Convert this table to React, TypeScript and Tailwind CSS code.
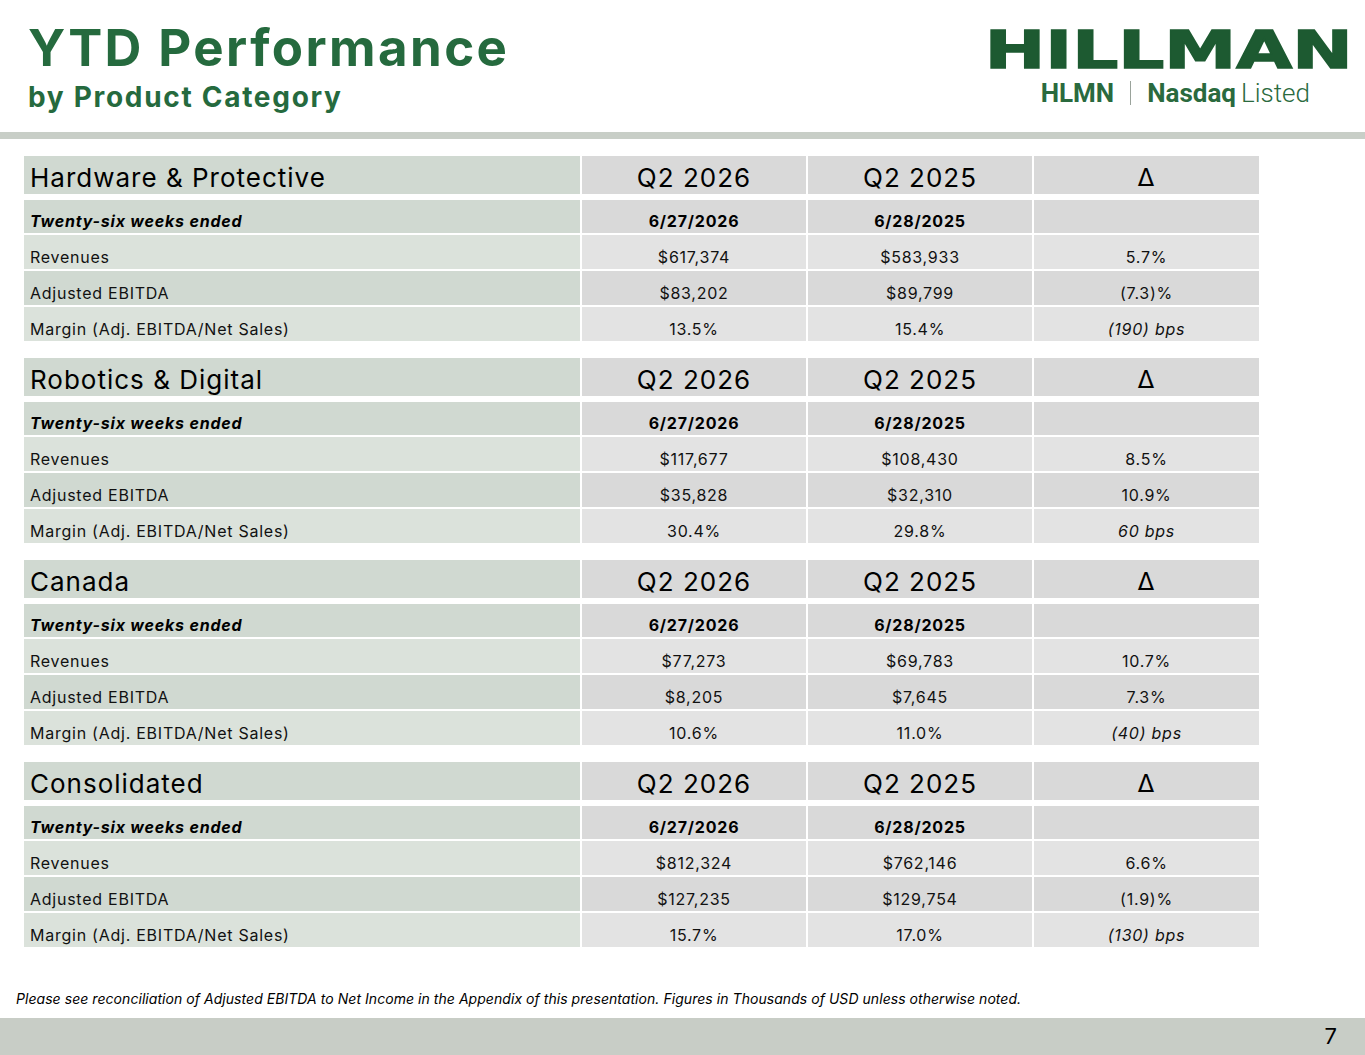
const sections = [
  {
    title: "Hardware & Protective",
    rows: [
      ["Revenues", "$617,374", "$583,933", "5.7%"],
      ["Adjusted EBITDA", "$83,202", "$89,799", "(7.3)%"],
      ["Margin (Adj. EBITDA/Net Sales)", "13.5%", "15.4%", "(190) bps"],
    ],
  },
  {
    title: "Robotics & Digital",
    rows: [
      ["Revenues", "$117,677", "$108,430", "8.5%"],
      ["Adjusted EBITDA", "$35,828", "$32,310", "10.9%"],
      ["Margin (Adj. EBITDA/Net Sales)", "30.4%", "29.8%", "60 bps"],
    ],
  },
  {
    title: "Canada",
    rows: [
      ["Revenues", "$77,273", "$69,783", "10.7%"],
      ["Adjusted EBITDA", "$8,205", "$7,645", "7.3%"],
      ["Margin (Adj. EBITDA/Net Sales)", "10.6%", "11.0%", "(40) bps"],
    ],
  },
  {
    title: "Consolidated",
    rows: [
      ["Revenues", "$812,324", "$762,146", "6.6%"],
      ["Adjusted EBITDA", "$127,235", "$129,754", "(1.9)%"],
      ["Margin (Adj. EBITDA/Net Sales)", "15.7%", "17.0%", "(130) bps"],
    ],
  },
];

const grid = "grid grid-cols-[556px_224px_224px_225px] gap-x-[2px]";

const Section = ({ title, rows }: { title: string; rows: string[][] }) => (
  <div className="flex flex-col">
    {/* Header */}
    <div className={`${grid} h-[38px] text-[26px] leading-[26px] tracking-[1px] text-black`}>
      <div className="bg-[#d0d9d1] flex items-center pl-[6px] pt-[6px]">{title}</div>
      <div className="bg-[#d9d9d9] flex items-center justify-center pt-[6px]">Q2 2026</div>
      <div className="bg-[#d9d9d9] flex items-center justify-center pt-[6px]">Q2 2025</div>
      <div className="bg-[#d9d9d9] flex items-center justify-center pt-[6px] font-['DejaVu_Sans',sans-serif] text-[24px]">Δ</div>
    </div>

    {/* Date row */}
    <div className={`${grid} h-[33px] mt-[6px] text-[16px] leading-[20px] tracking-[0.8px] font-bold text-black`}>
      <div className="bg-[#d0d9d1] flex items-center pl-[6px] pt-[8px] italic">Twenty-six weeks ended</div>
      <div className="bg-[#d9d9d9] flex items-center justify-center pt-[8px]">6/27/2026</div>
      <div className="bg-[#d9d9d9] flex items-center justify-center pt-[8px]">6/28/2025</div>
      <div className="bg-[#d9d9d9]" />
    </div>

    {rows.map((r, i) => {
      const light = i % 2 === 0;
      return (
        <div key={i} className={`${grid} h-[34px] mt-[2px] text-[16px] leading-[20px] tracking-[0.75px] text-[#111]`}>
          <div className={`${light ? "bg-[#dbe2db]" : "bg-[#d0d9d1]"} flex items-center pl-[6px] pt-[10px]`}>{r[0]}</div>
          <div className={`${light ? "bg-[#e3e3e3]" : "bg-[#d9d9d9]"} flex items-center justify-center pt-[10px]`}>{r[1]}</div>
          <div className={`${light ? "bg-[#e3e3e3]" : "bg-[#d9d9d9]"} flex items-center justify-center pt-[10px]`}>{r[2]}</div>
          <div className={`${light ? "bg-[#e3e3e3]" : "bg-[#d9d9d9]"} flex items-center justify-center pt-[10px] ${r[3].includes("bps") ? "italic" : ""}`}>{r[3]}</div>
        </div>
      );
    })}
  </div>
);

export default function App() {
  return (
    <div className="w-[1365px] h-[1055px] bg-white flex flex-col font-['Inter',sans-serif] overflow-hidden">
      {/* Title + logo */}
      <div className="h-[132px] flex justify-between pl-[28px] pr-[12px]">
        <div className="pt-[22px] text-[#256a3e] font-bold">
          <div className="text-[51px] leading-[52px] tracking-[2.4px]">YTD Performance</div>
          <div className="text-[28px] leading-[28px] mt-[9px] tracking-[1.7px]">by Product Category</div>
        </div>
        <div className="pt-[24px] flex flex-col items-end">
          <div className="font-['DejaVu_Sans',sans-serif] font-bold text-[#1d5a31] text-[52px] leading-[52px] scale-x-[1.39] origin-right [-webkit-text-stroke:1.5px_#1d5a31]">
            HILLMAN
          </div>
          <div className="mt-[2px] mr-[43px] flex items-center text-[#2a6a3e] text-[26px] leading-[30px] font-['Roboto',sans-serif]">
            <span className="font-bold">HLMN</span>
            <span className="mx-[16px] w-[1px] h-[24px] bg-[#9aa39b]" />
            <span className="font-bold">Nasdaq</span>
            <span className="ml-[5px] font-light">Listed</span>
          </div>
        </div>
      </div>

      {/* Rule */}
      <div className="h-[7px] bg-[#c8cec7]" />

      {/* Tables */}
      <div className="ml-[24px] mt-[17px] flex flex-col gap-[17px]">
        {sections.map((s) => (
          <Section key={s.title} title={s.title} rows={s.rows} />
        ))}
      </div>

      <div className="flex-1" />

      {/* Footnote */}
      <div className="pl-[16px] pb-[9px] text-[14px] tracking-[0.05px] italic text-black">
        Please see reconciliation of Adjusted EBITDA to Net Income in the Appendix of this presentation. Figures in Thousands of USD unless otherwise noted.
      </div>

      {/* Bottom bar */}
      <div className="h-[37px] bg-[#c8cdc6] flex items-center justify-end pr-[28px] text-[22px] text-black">
        7
      </div>
    </div>
  );
}
